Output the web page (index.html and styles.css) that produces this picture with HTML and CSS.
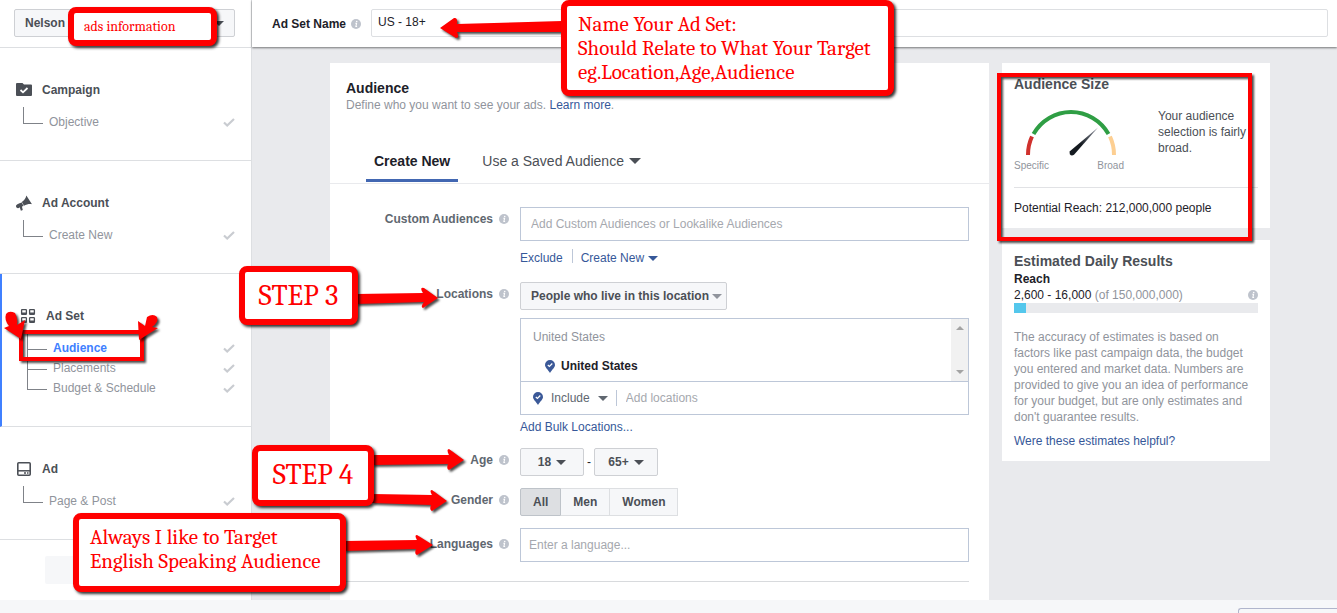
FILE: index.html
```
<!DOCTYPE html>
<html lang="en">
<head>
<meta charset="utf-8">
<title>Ad Set - Audience</title>
<link rel="stylesheet" href="styles.css">
</head>
<body>
<svg class="defs" width="0" height="0" aria-hidden="true">
  <symbol id="info" viewBox="0 0 10 10"><circle cx="5" cy="5" r="5" fill="#bec3cc"/><path d="M4.300 4.300h1.300L4.900 7.500h1.200" stroke="#fff" stroke-width="1.100" fill="none"/><circle cx="5.700" cy="2.500" r=".8" fill="#fff"/></symbol>
  <symbol id="check" viewBox="0 0 12 9"><path d="M1 4.500l3.200 3L11 1" fill="none" stroke="#c9ccd1" stroke-width="2.200"/></symbol>
  <symbol id="pin" viewBox="0 0 10 13"><path d="M5 0a5 5 0 0 1 5 5c0 2.600-3 4.500-5 8C3 9.500 0 7.600 0 5a5 5 0 0 1 5-5z" fill="#3b5998"/><path d="M2.800 5l1.600 1.500L7.300 3.500" fill="none" stroke="#fff" stroke-width="1.200"/></symbol>
</svg>
<div class="page">
  <div class="work">
    <aside class="sidebar">
      <div class="account-bar">
        <button class="btn account-btn" type="button"><span>Nelson</span><i class="caret"></i></button>
      </div>
      <nav>
        <section class="step">
          <h2><svg width="16" height="14" viewBox="0 0 16 14"><path d="M1 0h5.500l1.500 1.500h7a1 1 0 0 1 1 1V12a1 1 0 0 1-1 1H1a1 1 0 0 1-1-1V1a1 1 0 0 1 1-1z" fill="#4b4f56"/><path d="M4.500 7l2.500 2.300L11.500 5" fill="none" stroke="#fff" stroke-width="1.800"/></svg>Campaign</h2>
          <ul><li><a href="#">Objective</a><svg width="12" height="9"><use href="#check"/></svg></li></ul>
        </section>
        <section class="step">
          <h2><svg width="16" height="17" viewBox="0 0 17 17"><path d="M11 0l6 9.300c-2.500-.6-6 .2-8.500 1.500L6.200 7C8.500 5.500 10.500 3 11 0z" fill="#4b4f56"/><path d="M5.800 7.300l2.300 3.800-1.800.7.9 3.500-2 1-1.300-3.800C2.500 14 .8 13.500.2 12.200c-.6-1.400.1-2.500 1.300-3 1.500-.5 3-.8 4.300-1.900z" fill="#4b4f56"/></svg>Ad Account</h2>
          <ul><li><a href="#">Create New</a><svg width="12" height="9"><use href="#check"/></svg></li></ul>
        </section>
        <section class="step active">
          <h2><svg width="16" height="14" viewBox="0 0 16 14"><g fill="none" stroke="#4b4f56" stroke-width="1.300"><rect x="1.600" y=".6" width="4.800" height="4.800" rx=".6"/><rect x="9.600" y=".6" width="4.800" height="4.800" rx=".6"/><rect x="1.600" y="8.600" width="4.800" height="4.800" rx=".6"/><rect x="9.600" y="8.600" width="4.800" height="4.800" rx=".6"/></g><path d="M2 3.500h4v2H2zM10 3.500h4v2h-4zM2 11.500h4v2H2zM10 11.500h4v2h-4z" fill="#4b4f56"/></svg>Ad Set</h2>
          <ul>
            <li><a href="#" class="current">Audience</a><svg width="12" height="9"><use href="#check"/></svg></li>
            <li><a href="#">Placements</a><svg width="12" height="9"><use href="#check"/></svg></li>
            <li><a href="#">Budget &amp; Schedule</a><svg width="12" height="9"><use href="#check"/></svg></li>
          </ul>
        </section>
        <section class="step">
          <h2><svg width="16" height="14" viewBox="0 0 16 14"><rect x="1.800" y=".8" width="12.400" height="12.400" rx="1" fill="none" stroke="#4b4f56" stroke-width="1.600"/><path d="M2 8.800h12" stroke="#4b4f56" stroke-width="1.500"/><path d="M8 11h2M11 11h1.500" stroke="#4b4f56" stroke-width="1.400"/></svg>Ad</h2>
          <ul><li><a href="#">Page &amp; Post</a><svg width="12" height="9"><use href="#check"/></svg></li></ul>
        </section>
      </nav>
      <button class="close-btn" type="button" aria-label="Close"></button>
    </aside>

    <main class="main">
      <header class="name-bar">
        <label for="adset">Ad Set Name</label>
        <svg width="10" height="10"><use href="#info"/></svg>
        <input id="adset" type="text" value="US - 18+">
      </header>
      <div class="columns">
        <section class="panel">
          <h1>Audience</h1>
          <p class="intro">Define who you want to see your ads. <a href="#">Learn more</a>.</p>
          <div class="tabs">
            <button type="button" class="tab selected">Create New</button>
            <button type="button" class="tab">Use a Saved Audience<i class="caret wide"></i></button>
          </div>
          <form class="form">
            <div class="field">
              <label for="custom">Custom Audiences<svg width="10" height="10"><use href="#info"/></svg></label>
              <div>
                <input class="box" id="custom" type="text" placeholder="Add Custom Audiences or Lookalike Audiences">
                <div class="links"><a href="#">Exclude</a><a href="#" class="divided">Create New<i class="caret"></i></a></div>
              </div>
            </div>
            <div class="field">
              <label for="place">Locations<svg width="10" height="10"><use href="#info"/></svg></label>
              <div>
                <button class="btn live" type="button">People who live in this location<i class="caret pale"></i></button>
                <div class="locations">
                  <div class="chosen">
                    <div class="list">
                      <div class="country">United States</div>
                      <div class="place"><svg width="10" height="13"><use href="#pin"/></svg>United States</div>
                    </div>
                    <div class="scroll"><i class="up"></i><i class="down"></i></div>
                  </div>
                  <div class="add">
                    <button type="button" class="include"><svg width="10" height="13"><use href="#pin"/></svg>Include<i class="caret"></i></button>
                    <input id="place" type="text" placeholder="Add locations">
                  </div>
                </div>
                <a class="bulk" href="#">Add Bulk Locations...</a>
              </div>
            </div>
            <div class="field">
              <label for="age">Age<svg width="10" height="10"><use href="#info"/></svg></label>
              <div class="ages"><button id="age" class="btn age" type="button">18<i class="caret"></i></button><span>-</span><button class="btn age" type="button">65+<i class="caret"></i></button></div>
            </div>
            <div class="field">
              <label for="gender">Gender<svg width="10" height="10"><use href="#info"/></svg></label>
              <div class="genders"><button id="gender" class="on" type="button">All</button><button type="button">Men</button><button type="button">Women</button></div>
            </div>
            <div class="field">
              <label for="lang">Languages<svg width="10" height="10"><use href="#info"/></svg></label>
              <input class="box narrow" id="lang" type="text" placeholder="Enter a language...">
            </div>
            <hr>
          </form>
        </section>

        <aside class="cards">
          <section class="card">
            <h3>Audience Size</h3>
            <div class="size">
              <div class="gauge">
                <svg width="110" height="50" viewBox="0 0 110 50">
                  <defs><linearGradient id="needle" x1="0" y1="1" x2="1" y2="0"><stop offset=".4" stop-color="#141a20"/><stop offset="1" stop-color="#5a5f70" stop-opacity=".7"/></linearGradient></defs>
                  <g fill="none" stroke-width="4">
                    <path d="M14 47A43 43 0 0 1 18 28.500" stroke="#d0312d"/>
                    <path d="M19.500 26A43 43 0 0 1 94.500 26" stroke="#2f9e44"/>
                    <path d="M96 28.500A43 43 0 0 1 100 47" stroke="#fdcf92"/>
                  </g>
                  <path d="M55.500 43.500L84 19.500L60 46.800Q57.500 48.500 55.800 46.300Z" fill="url(#needle)"/>
                </svg>
                <div class="scale"><span>Specific</span><span>Broad</span></div>
              </div>
              <p>Your audience selection is fairly broad.</p>
            </div>
            <div class="potential">Potential Reach: 212,000,000 people</div>
          </section>
          <section class="card">
            <h3>Estimated Daily Results</h3>
            <div class="reach">Reach</div>
            <div class="figures"><span>2,600 - 16,000 <em>(of 150,000,000)</em></span><svg width="10" height="10"><use href="#info"/></svg></div>
            <div class="meter"><div style="width:5%"></div></div>
            <p class="note">The accuracy of estimates is based on factors like past campaign data, the budget you entered and market data. Numbers are provided to give you an idea of performance for your budget, but are only estimates and don't guarantee results.</p>
            <a href="#">Were these estimates helpful?</a>
          </section>
        </aside>
      </div>
    </main>
  </div>
  <footer class="footer"><button type="button" aria-label="Help"></button></footer>

  <div class="marks">
    <div class="frame frame-size"></div>
    <div class="frame frame-nav"></div>
    <svg class="arrows" width="1337" height="613" viewBox="0 0 1337 613" fill="#f00">
      <path d="M440 28L454 18Q458 17 457 24L562 21V32L457 32Q460 38 456 38Z"/>
      <path d="M356 294L423 293Q419 287 424 288L438 298L423 308Q420 307 424 302L356 304Z"/>
      <path d="M372 455L449 455Q446 449 449 449L464 460L449 470Q446 469 448 464L372 465Z"/>
      <path d="M372 494L432 495Q429 490 432 490L447 501L432 511Q429 510 431 505L372 503Z"/>
      <path d="M344 541L417 540Q414 535 417 535L433 545L417 555Q414 554 416 549L344 551Z"/>
      <path d="M6 314Q9 310 15 313Q18 319 17 325L25 320L21 339L4 328L9 326Q4 320 6 314Z"/>
      <path d="M157 317Q153 313 147 317L145 326L138 321L139 340L158 328L152 327Q159 322 157 317Z"/>
    </svg>
    <div class="note-box n-ads">ads information</div>
    <div class="note-box n-name">Name Your Ad Set:<br>Should Relate to What Your Target<br>eg.Location,Age,Audience</div>
    <div class="note-box n-step3">STEP 3</div>
    <div class="note-box n-step4">STEP 4</div>
    <div class="note-box n-lang">Always I like to Target<br>English Speaking Audience</div>
  </div>
</div>
</body>
</html>
```
FILE: styles.css
```
* { box-sizing: border-box; }
body { margin: 0; font: 12px/16px Arial, "Liberation Sans", sans-serif; color: #1d2129; background: #fff; }
h1, h2, h3, p, ul { margin: 0; padding: 0; }
button, input { font: inherit; color: inherit; }
button { cursor: pointer; }
a { color: #365899; text-decoration: none; }
ul { list-style: none; }
svg { flex: none; display: block; }
.defs { position: absolute; }

.page { position: relative; height: 100vh; display: flex; flex-direction: column; overflow: hidden; }
.work { flex: 1; min-height: 0; display: flex; overflow: hidden; }

.btn { display: inline-flex; align-items: center; height: 28px; padding: 0 7px 0 10px; gap: 5px; border: 1px solid #ced0d4; border-radius: 2px; background: #f6f7f9; color: #4b4f56; font-weight: bold; }
.live { padding-right: 4px; gap: 3px; }
.caret { display: inline-block; border: 5px solid transparent; border-top-color: currentColor; border-bottom: 0; }
.caret.wide { border-width: 6px 6px 0; margin-left: 5px; vertical-align: 2px; }
.caret.pale { color: #90949c; }

.sidebar { flex: 0 0 252px; border-right: 1px solid #dddfe2; }
.account-bar { height: 48px; padding: 9px 16px 0 14px; border-bottom: 1px solid #dddfe2; }
.account-btn { width: 100%; justify-content: space-between; padding: 0 10px; }
.step { padding: 32px 16px 28px; border-bottom: 1px solid #dddfe2; }
.step.active { border-left: 2px solid #4080ff; padding-left: 18px; }
.step h2 { display: flex; align-items: center; gap: 10px; height: 20px; font-size: 12px; color: #4b4f56; }
.step ul { margin-top: 12px; }
.step li { display: flex; align-items: center; height: 20px; padding-left: 7px; color: #90949c; }
.step li::before { content: ""; align-self: flex-start; width: 19px; height: 20px; margin: -10px 6px 0 0; border: solid #7f8288; border-width: 0 0 1px 1px; }
.step li:first-child::before { height: 16px; margin-top: -5px; }
.step li::before { height: 21px; }
.step li a { flex: 1; color: #90949c; }
.step li a.current { color: #4080ff; font-weight: bold; }
.close-btn { display: block; width: 64px; height: 28px; margin: 16px 0 0 45px; border: 0; border-radius: 2px; background: #f6f7f9; }

.main { flex: 1; min-width: 0; display: flex; flex-direction: column; background: #e9eaed; }
.name-bar { position: relative; display: flex; align-items: center; gap: 5px; height: 47px; padding: 0 9px 0 20px; background: #fff; box-shadow: 0 1px 2px rgba(0, 0, 0, .5); }
.name-bar label { font-weight: bold; }
.name-bar input { flex: 1; min-width: 0; height: 28px; margin: 0 0 1px 5px; padding: 0 6px 2px; border: 1px solid #dddfe2; border-radius: 2px; background: #fff; }
.columns { flex: 1; display: flex; gap: 13px; padding: 16px 67px 0 78px; }

.panel { flex: 1; min-width: 0; background: #fff; }
.panel h1 { margin: 17px 16px 0; font-size: 14px; line-height: 16px; }
.intro { margin: 0 16px; line-height: 18px; color: #90949c; }
.tabs { display: flex; gap: 16px; margin-top: 24px; padding: 0 36px; border-bottom: 1px solid #e9eaed; }
.tab { height: 44px; margin-bottom: 1px; padding: 5px 8px 0; border: 0; border-bottom: 3px solid transparent; background: none; font-size: 14px; color: #4b4f56; white-space: nowrap; }
.tab.selected { border-color: #4267b2; font-weight: bold; color: #1d2129; }

.form { display: grid; gap: 12px; padding: 23px 20px 0 16px; }
.field { display: grid; grid-template-columns: 163px minmax(0, 1fr); gap: 11px; }
.field > label { display: flex; align-items: center; justify-content: flex-end; gap: 6px; height: 24px; color: #606770; font-weight: bold; }
.field:last-of-type > label { height: 32px; }
.box { display: block; width: 100%; height: 34px; padding: 0 10px; border: 1px solid #bdc7d8; background: #fff; }
.box.narrow { padding: 0 8px; }
::placeholder { color: #a5a8ae; opacity: 1; }
.links { display: flex; align-items: flex-start; gap: 9px; margin-top: 8px; height: 21px; line-height: 18px; }
.links .divided { padding-left: 8px; border-left: 1px solid #bdc7d8; line-height: 18px; height: 14px; }
.divided .caret { margin-left: 4px; vertical-align: 1px; }
.locations { margin-top: 8px; border: 1px solid #bdc7d8; }
.chosen { display: flex; height: 63px; border-bottom: 1px solid #bdc7d8; }
.list { flex: 1; padding: 10px 12px; }
.country { color: #90949c; }
.place { display: flex; align-items: center; gap: 6px; margin: 13px 0 0 12px; font-weight: bold; }
.scroll { display: flex; flex-direction: column; align-items: center; justify-content: space-between; width: 17px; padding: 7px 0; background: #f1f1f1; color: #a3a3a3; }
.up, .down { border: 4px solid transparent; }
.up { border-bottom-color: currentColor; border-top: 0; }
.down { border-top-color: currentColor; border-bottom: 0; }
.add { display: flex; align-items: center; height: 32px; padding: 0 12px; }
.include { display: flex; align-items: center; gap: 8px; padding: 0 8px 0 0; border: 0; border-right: 1px solid #bdc7d8; background: none; color: #606770; }
.add input { flex: 1; min-width: 0; padding: 0 9px; border: 0; background: none; }
.bulk { display: block; margin-top: 4px; line-height: 17px; }
.ages { display: flex; align-items: center; gap: 3px; }
.age { width: 64px; padding: 0; justify-content: center; }
.genders { display: flex; }
.genders button { height: 28px; padding: 0 12px; border: 1px solid #dddfe2; border-left-width: 0; background: #f6f7f9; color: #4b4f56; font-weight: bold; }
.genders .on { border: 1px solid #bec3c9; background: #dddfe2; border-radius: 2px 0 0 2px; }
.form hr { width: 100%; margin: 7px 0 0; border: 0; border-top: 1px solid #d8dadd; }

.cards { flex: 0 0 268px; }
.card { margin-bottom: 12px; padding: 13px 12px 12px; background: #fff; }
.card h3 { font-size: 14px; line-height: 16px; color: #4b4f56; }
.size { display: flex; justify-content: space-between; padding: 16px 0 15px; border-bottom: 1px solid #e1e2e5; }
.size p { width: 100px; color: #4b4f56; }
.gauge { width: 110px; }
.scale { display: flex; justify-content: space-between; margin-top: 2px; font-size: 10px; line-height: 12px; color: #90949c; }
.potential { margin-top: 12px; }
.reach { margin-top: 2px; font-weight: bold; }
.figures { display: flex; align-items: center; justify-content: space-between; }
.figures em { font-style: normal; color: #90949c; }
.meter { height: 10px; background: #e9eaed; }
.meter div { height: 100%; background: #54c7ec; }
.note { margin: 16px 0 8px; color: #90949c; }

.footer { flex: 0 0 13px; padding: 8px 0 0; overflow: hidden; background: #f6f7f9; }
.footer button { display: block; width: 99px; height: 28px; margin-left: auto; border: 1px solid #b0b5cc; border-right: 0; border-radius: 3px 0 0 3px; background: #f6f7f9; }

/* Hand-drawn annotations lying over the interface */
.marks { position: absolute; inset: 0; pointer-events: none; }
.arrows { position: absolute; left: 0; top: 0; filter: drop-shadow(2px 2px 1px rgba(0, 0, 0, .7)); }
.note-box { position: absolute; border: 6px solid #f00; border-radius: 8px; background: #fff; color: #f00; font-family: Cambria, "Liberation Serif", serif; font-size: 21px; line-height: 24px; white-space: nowrap; box-shadow: 2px 2px 3px rgba(0, 0, 0, .8); }
.n-ads { left: 68px; top: 7px; width: 149px; height: 39px; padding: 2px 10px; font-size: 14px; }
.n-name { left: 561px; top: 0; width: 333px; height: 96px; padding: 6px 11px; }
.n-step3, .n-step4 { font-size: 29px; line-height: 48px; text-align: center; }
.n-step3 { left: 239px; top: 266px; width: 119px; height: 59px; }
.n-step4 { left: 252px; top: 445px; width: 122px; height: 61px; }
.n-lang { left: 73px; top: 513px; width: 273px; height: 79px; padding: 6px 11px; }
.frame { position: absolute; border: 4px solid #f00; filter: drop-shadow(2px 2px 1px rgba(0, 0, 0, .7)); }
.frame-size { left: 997px; top: 73px; width: 255px; height: 168px; }
.frame-nav { left: 19px; top: 330px; width: 125px; height: 31px; }
```
